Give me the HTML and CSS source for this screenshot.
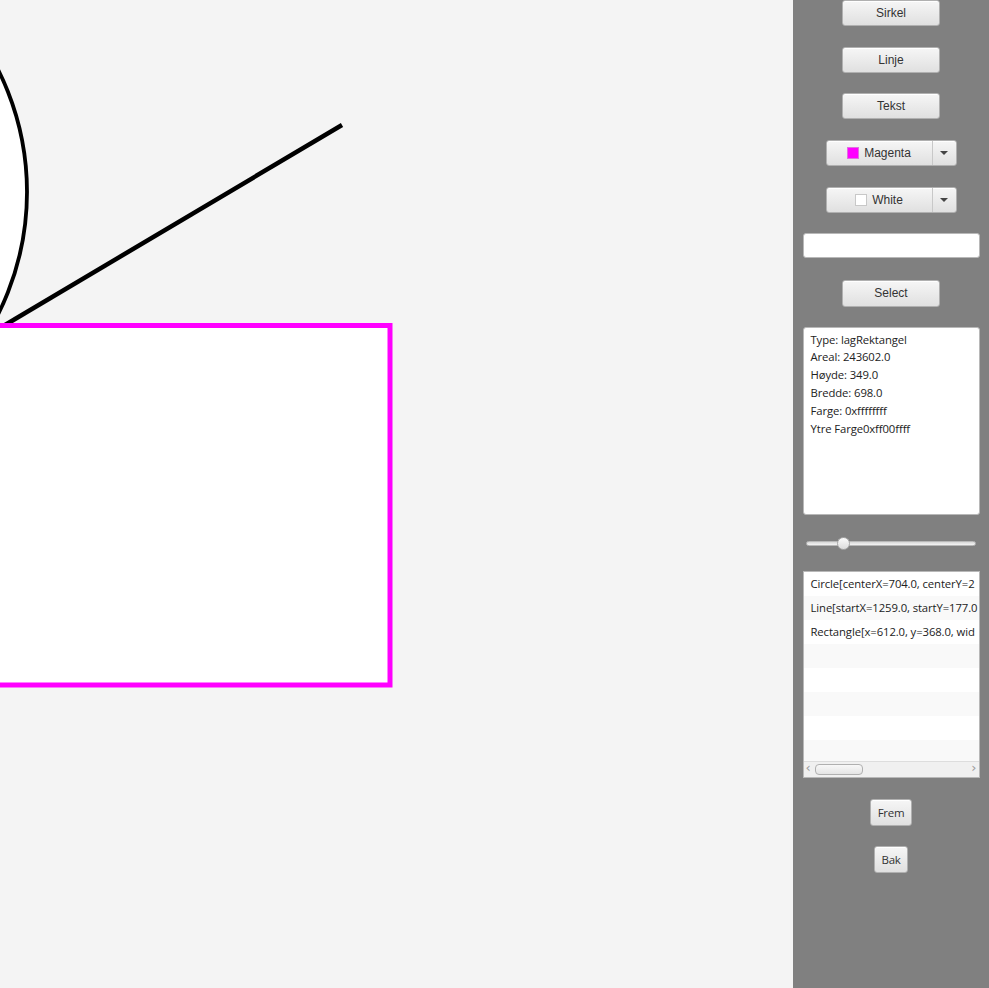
FILE: index.html
```html
<!DOCTYPE html>
<html>
<head>
<meta charset="utf-8">
<link rel="stylesheet" href="styles.css">
</head>
<body>
<div class="app">
  <div class="canvas">
    <svg class="drawing" width="793" height="988" viewBox="0 0 793 988">
      <circle cx="-246" cy="192" r="273" fill="#ffffff" stroke="#000000" stroke-width="3.8"/>
      <line x1="5" y1="325" x2="342" y2="125" stroke="#000000" stroke-width="4.5"/>
      <rect x="-20" y="325.5" width="410" height="359.5" fill="#ffffff" stroke="#ff00ff" stroke-width="5"/>
    </svg>
  </div>
  <div class="sidebar">
    <button class="btn wide first">Sirkel</button>
    <button class="btn wide">Linje</button>
    <button class="btn wide">Tekst</button>
    <div class="combo">
      <div class="combo-main"><span class="swatch magenta"></span>Magenta</div>
      <div class="combo-arrow"><span class="tri"></span></div>
    </div>
    <div class="combo">
      <div class="combo-main"><span class="swatch white"></span>White</div>
      <div class="combo-arrow"><span class="tri"></span></div>
    </div>
    <div class="field"></div>
    <button class="btn wide select">Select</button>
    <div class="info">
      <div>Type: lagRektangel</div>
      <div>Areal: 243602.0</div>
      <div>Høyde: 349.0</div>
      <div>Bredde: 698.0</div>
      <div>Farge: 0xffffffff</div>
      <div>Ytre Farge0xff00ffff</div>
    </div>
    <div class="slider">
      <div class="track"></div>
      <div class="thumb"></div>
    </div>
    <div class="list">
      <div class="rows">
        <div class="row">Circle[centerX=704.0, centerY=2</div>
        <div class="row alt">Line[startX=1259.0, startY=177.0</div>
        <div class="row">Rectangle[x=612.0, y=368.0, wid</div>
        <div class="row alt"></div>
        <div class="row"></div>
        <div class="row alt"></div>
        <div class="row"></div>
        <div class="row alt"></div>
      </div>
      <div class="hscroll">
        <span class="arr left">&#8249;</span>
        <div class="hthumb"></div>
        <span class="arr right">&#8250;</span>
      </div>
    </div>
    <button class="btn small frem">Frem</button>
    <button class="btn small bak">Bak</button>
  </div>
</div>
</body>
</html>
```
FILE: styles.css
```css
html, body {
  margin: 0;
  padding: 0;
  width: 989px;
  height: 988px;
  overflow: hidden;
}
body {
  font-family: "Liberation Sans", Arial, sans-serif;
}
.app {
  display: flex;
  width: 989px;
  height: 988px;
}
.canvas {
  width: 793px;
  height: 988px;
  background: #f4f4f4;
  overflow: hidden;
}
.drawing {
  display: block;
}
.sidebar {
  width: 196px;
  height: 988px;
  background: #808080;
  display: flex;
  flex-direction: column;
  align-items: center;
  box-sizing: border-box;
}
.btn {
  font-family: "Liberation Sans", Arial, sans-serif;
  font-size: 12px;
  color: #333333;
  background: linear-gradient(#f6f6f6, #e0e0e0);
  border: 1px solid #b0b0b0;
  border-radius: 3px;
  box-shadow: inset 0 1px 0 #ffffff;
  padding: 0;
  height: 26px;
  flex: none;
}
.wide {
  width: 98px;
  margin-top: 20.67px;
}
.wide.first {
  margin-top: 0;
}
.wide.select {
  margin-top: 22px;
  height: 27px;
}
.combo {
  margin-top: 20.67px;
  width: 131px;
  height: 26px;
  display: flex;
  border: 1px solid #b0b0b0;
  border-radius: 3px;
  background: linear-gradient(#f6f6f6, #e0e0e0);
  box-shadow: inset 0 1px 0 #ffffff;
  box-sizing: border-box;
  flex: none;
}
.combo-main {
  flex: 1;
  display: flex;
  align-items: center;
  justify-content: center;
  gap: 5px;
  font-size: 12px;
  color: #333333;
  border-right: 1px solid #c8c8c8;
}
.combo-arrow {
  width: 23px;
  display: flex;
  align-items: center;
  justify-content: center;
}
.tri {
  width: 0;
  height: 0;
  border-left: 4px solid transparent;
  border-right: 4px solid transparent;
  border-top: 4px solid #444444;
}
.swatch {
  width: 10px;
  height: 10px;
  border: 1px solid #c8c8c8;
}
.swatch.magenta {
  background: #ff00ff;
  border-color: #e070e0;
}
.swatch.white {
  background: #ffffff;
}
.field {
  margin-top: 20px;
  width: 177px;
  height: 25px;
  background: #ffffff;
  border: 1px solid #b8b8b8;
  border-radius: 3px;
  box-sizing: border-box;
  flex: none;
}
.info {
  margin-top: 20px;
  width: 177px;
  height: 188px;
  background: #ffffff;
  border: 1px solid #b8b8b8;
  border-radius: 3px;
  box-sizing: border-box;
  padding: 3px 7px;
  font-family: "Open Sans", "Noto Sans", sans-serif;
  font-size: 11.3px;
  letter-spacing: -0.1px;
  line-height: 17.8px;
  color: #222222;
  flex: none;
}
.slider {
  margin-top: 22px;
  width: 170px;
  height: 14px;
  position: relative;
  flex: none;
}
.track {
  position: absolute;
  left: 0;
  right: 0;
  top: 4px;
  height: 5px;
  border-radius: 3px;
  background: linear-gradient(#d8d8d8, #f4f4f4);
  border: 1px solid #b8b8b8;
  box-sizing: border-box;
}
.thumb {
  position: absolute;
  left: 31px;
  top: 0;
  width: 13px;
  height: 13px;
  border-radius: 50%;
  background: linear-gradient(#fbfbfb, #dcdcdc);
  border: 1px solid #a8a8a8;
  box-sizing: border-box;
}
.list {
  margin-top: 20.5px;
  width: 177px;
  height: 207px;
  background: #ffffff;
  border: 1px solid #b8b8b8;
  box-sizing: border-box;
  display: flex;
  flex-direction: column;
  overflow: hidden;
  flex: none;
}
.rows {
  flex: 1;
  overflow: hidden;
  min-width: 0;
}
.row {
  height: 24px;
  line-height: 23px;
  padding-left: 7px;
  white-space: nowrap;
  overflow: hidden;
  font-family: "Open Sans", "Noto Sans", sans-serif;
  font-size: 11.3px;
  letter-spacing: -0.1px;
  color: #222222;
  background: #ffffff;
}
.row.alt {
  background: #f9f9f9;
}
.hscroll {
  height: 15px;
  background: #f0f0f0;
  border-top: 1px solid #dddddd;
  display: flex;
  align-items: center;
  position: relative;
  flex: none;
}
.arr {
  position: absolute;
  top: -2px;
  font-size: 13px;
  color: #9a9a9a;
  font-family: "DejaVu Sans", sans-serif;
}
.arr.left {
  left: 2px;
}
.arr.right {
  right: 2px;
}
.hthumb {
  margin-left: 11px;
  width: 46px;
  height: 9px;
  border: 1px solid #b0b0b0;
  border-radius: 4px;
  background: linear-gradient(#f8f8f8, #e4e4e4);
}
.small {
  font-family: "Open Sans", "Noto Sans", sans-serif;
  font-size: 11.5px;
  letter-spacing: -0.3px;
}
.frem {
  margin-top: 21px;
  width: 42px;
  height: 27px;
}
.bak {
  margin-top: 20px;
  width: 34px;
  height: 27px;
}
```
